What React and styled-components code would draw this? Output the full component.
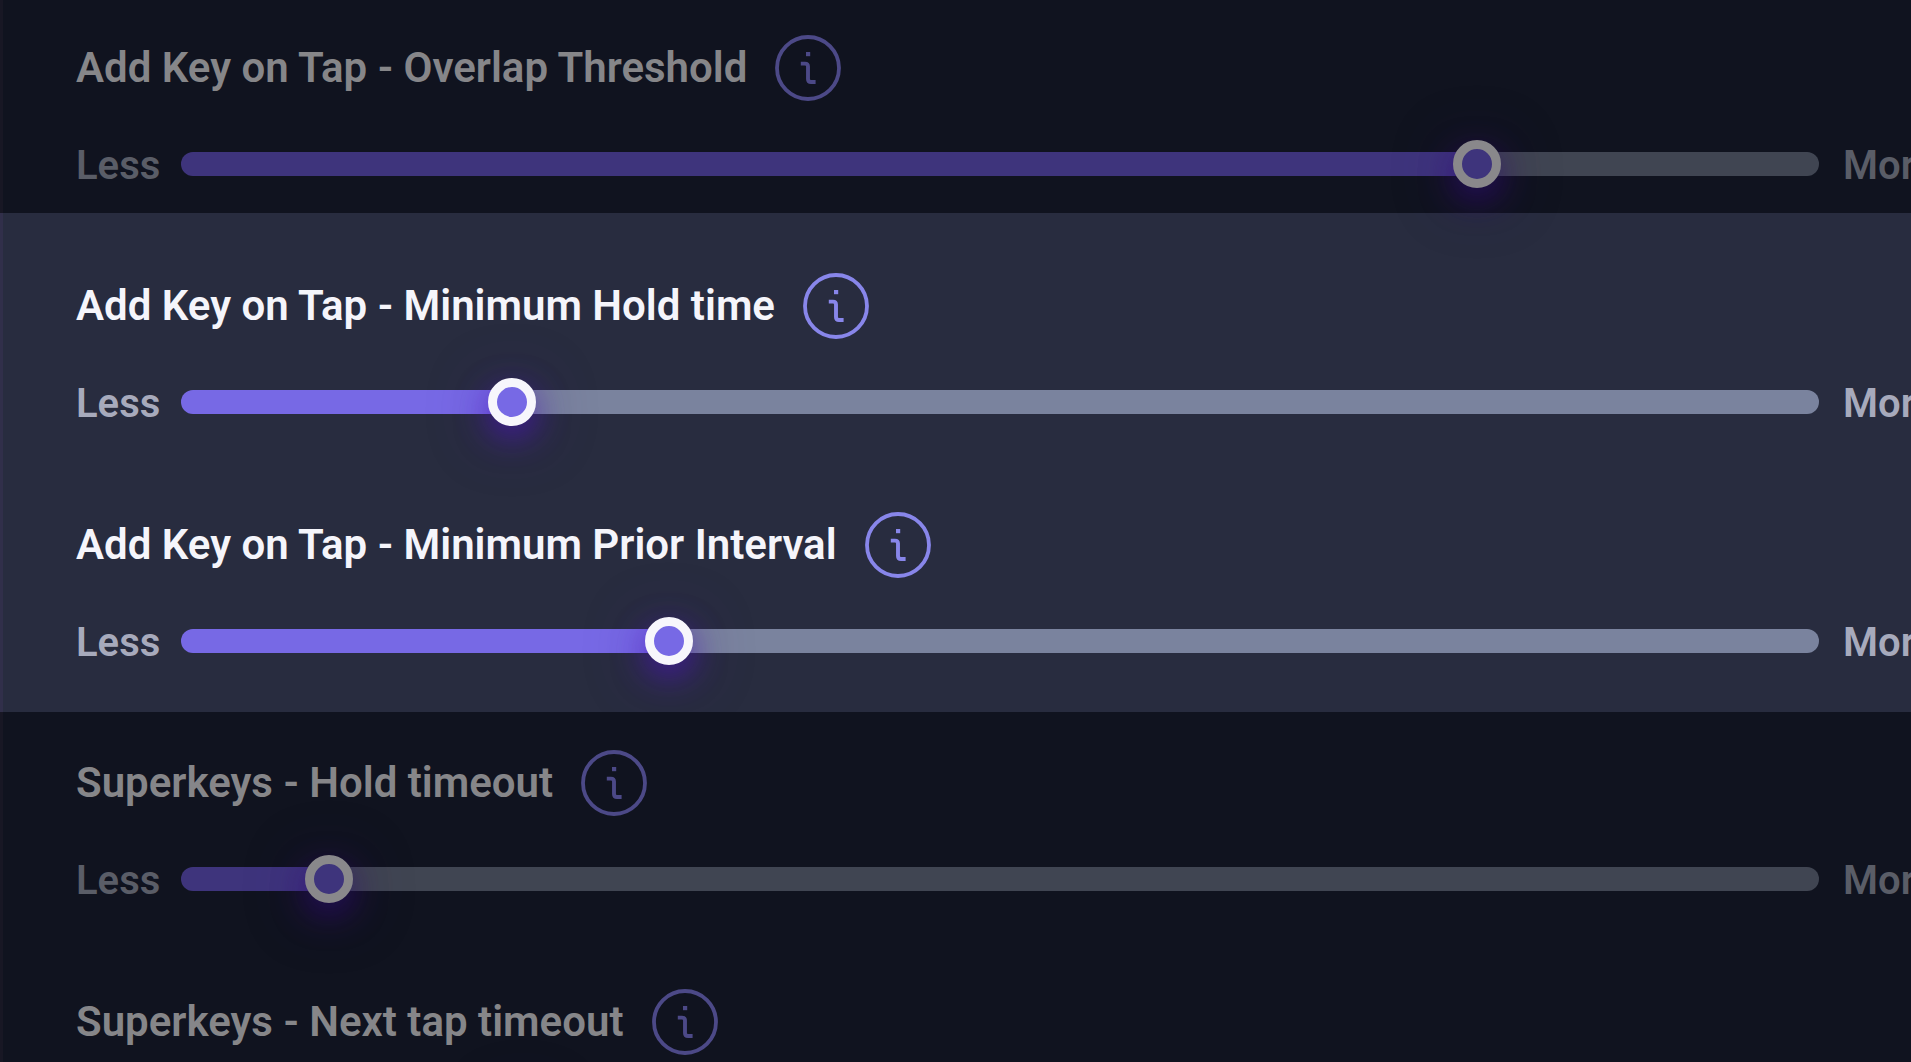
import React, { useState } from "react";
import styled, { createGlobalStyle, ThemeProvider } from "styled-components";

const GlobalStyle = createGlobalStyle`
  * {
    box-sizing: border-box;
  }
  body {
    margin: 0;
    background-color: #10131f;
    font-family: Roboto, "Liberation Sans", sans-serif;
    overflow: hidden;
  }
`;

const bright = {
  background: "#282c3f",
  edge: "#312f4a",
  title: "#f5f5fb",
  label: "#a7aabc",
  icon: "#8886ea",
  track: "#7a839e",
  fill: "#7769e5",
  thumb: "#f7f6fc",
  glow: "rgba(75, 20, 190, 0.65)",
  haze: "rgba(75, 30, 150, 0.4)",
};

const dimmed = {
  background: "#10131f",
  edge: "#181724",
  title: "#868689",
  label: "#5a5d67",
  icon: "#4c4987",
  track: "#404552",
  fill: "#3e347c",
  thumb: "#89888b",
  glow: "rgba(48, 10, 125, 0.6)",
  haze: "rgba(60, 15, 110, 0.35)",
};

const Page = styled.main`
  display: flex;
  flex-direction: column;
  min-height: 100vh;
`;

const Section = styled.section`
  position: relative;
  z-index: ${({ $raised }) => ($raised ? 1 : 0)};
  display: flex;
  flex-direction: column;
  flex-grow: ${({ $grow }) => ($grow ? 1 : 0)};
  gap: 86px;
  padding: ${({ $top, $bottom }) => `${$top}px 0 ${$bottom}px 73px`};
  border-left: 3px solid ${({ theme }) => theme.edge};
  background-color: ${({ theme }) => theme.background};
`;

const Setting = styled.div`
  display: flex;
  flex-direction: column;
  gap: 39px;
`;

const Heading = styled.div`
  display: flex;
  align-items: center;
  gap: 28px;
  height: 66px;
`;

const Title = styled.label`
  color: ${({ theme }) => theme.title};
  font-size: 42px;
  font-weight: 600;
  line-height: 52px;
  white-space: nowrap;
`;

const InfoButton = styled.button`
  display: flex;
  padding: 0;
  border: none;
  background: none;
  color: ${({ theme }) => theme.icon};
  cursor: pointer;
`;

const SliderRow = styled.div`
  display: flex;
  align-items: center;
  gap: 24px;
  height: 48px;
  margin-right: -24px;
`;

const RangeLabel = styled.span`
  flex: none;
  width: ${({ $width }) => $width}px;
  padding-top: 3px;
  color: ${({ theme }) => theme.label};
  font-size: 40px;
  font-weight: 600;
  line-height: 48px;
`;

const Slider = styled.input`
  appearance: none;
  flex: 1;
  min-width: 0;
  height: 24px;
  margin: 0;
  border-radius: 12px;
  outline: none;
  cursor: pointer;
  background: linear-gradient(
    to right,
    ${({ theme }) => theme.fill} calc(24px + (100% - 48px) * var(--ratio)),
    ${({ theme }) => theme.track} calc(24px + (100% - 48px) * var(--ratio))
  );
  &::-webkit-slider-thumb {
    appearance: none;
    width: 48px;
    height: 48px;
    border: 9px solid ${({ theme }) => theme.thumb};
    border-radius: 50%;
    background-color: ${({ theme }) => theme.fill};
    box-shadow: 0 12px 32px ${({ theme }) => theme.glow},
      0 8px 64px ${({ theme }) => theme.haze};
  }
`;

const InfoIcon = () => (
  <svg width="66" height="66" viewBox="0 0 66 66" fill="none" aria-hidden="true">
    <circle cx="33" cy="33" r="31" stroke="currentColor" strokeWidth="3.8" />
    <rect x="31" y="17" width="4.2" height="4.2" fill="currentColor" />
    <path
      d="M25.8 28.6h4.2q3 0 3 3v12.4q0 3 3 3h4.6"
      stroke="currentColor"
      strokeWidth="3.9"
    />
  </svg>
);

const SliderSetting = ({ id, title, initial }) => {
  const [value, setValue] = useState(initial);
  return (
    <Setting>
      <Heading>
        <Title htmlFor={id}>{title}</Title>
        <InfoButton type="button" aria-label={`About ${title}`}>
          <InfoIcon />
        </InfoButton>
      </Heading>
      <SliderRow>
        <RangeLabel $width={81}>Less</RangeLabel>
        <Slider
          id={id}
          type="range"
          min="0"
          max="1000"
          value={value}
          style={{ "--ratio": value / 1000 }}
          onChange={(e) => setValue(Number(e.target.value))}
        />
        <RangeLabel $width={92}>More</RangeLabel>
      </SliderRow>
    </Setting>
  );
};

export default function App() {
  return (
    <Page>
      <GlobalStyle />
      <ThemeProvider theme={dimmed}>
        <Section $top={35} $bottom={25} $raised>
          <SliderSetting
            id="overlap"
            title="Add Key on Tap - Overlap Threshold"
            initial={800}
          />
        </Section>
      </ThemeProvider>
      <ThemeProvider theme={bright}>
        <Section $top={60} $bottom={47}>
          <SliderSetting
            id="min-hold"
            title="Add Key on Tap - Minimum Hold time"
            initial={193}
          />
          <SliderSetting
            id="min-prior"
            title="Add Key on Tap - Minimum Prior Interval"
            initial={292}
          />
        </Section>
      </ThemeProvider>
      <ThemeProvider theme={dimmed}>
        <Section $top={38} $bottom={47} $grow>
          <SliderSetting
            id="hold-timeout"
            title="Superkeys - Hold timeout"
            initial={78}
          />
          <SliderSetting
            id="next-tap"
            title="Superkeys - Next tap timeout"
            initial={200}
          />
        </Section>
      </ThemeProvider>
    </Page>
  );
}
